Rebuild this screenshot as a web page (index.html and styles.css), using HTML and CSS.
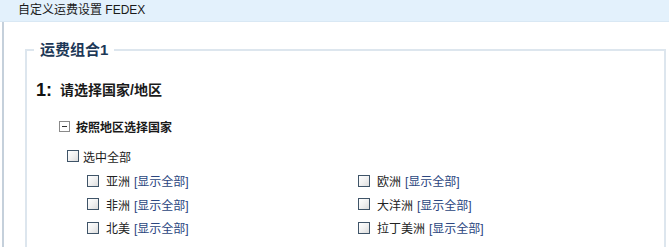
FILE: index.html
```html
<!DOCTYPE html>
<html lang="zh-CN">
<head>
<meta charset="utf-8">
<title>自定义运费设置 FEDEX</title>
<link rel="stylesheet" href="styles.css">
</head>
<body>
<div class="topbar">自定义运费设置 FEDEX</div>
<div class="main">
  <fieldset class="group">
    <legend class="group-title">运费组合1</legend>
    <div class="step"><b class="step-num">1:</b><span class="step-text">请选择国家/地区</span></div>
    <div class="tree-head"><span class="toggle"></span><span class="tree-label">按照地区选择国家</span></div>
    <div class="select-all"><span class="check"></span><span>选中全部</span></div>
    <div class="regions">
      <div class="region"><span class="check"></span><span class="name">亚洲</span><a class="more">[显示全部]</a></div>
      <div class="region"><span class="check"></span><span class="name">欧洲</span><a class="more">[显示全部]</a></div>
      <div class="region"><span class="check"></span><span class="name">非洲</span><a class="more">[显示全部]</a></div>
      <div class="region"><span class="check"></span><span class="name">大洋洲</span><a class="more">[显示全部]</a></div>
      <div class="region"><span class="check"></span><span class="name">北美</span><a class="more">[显示全部]</a></div>
      <div class="region"><span class="check"></span><span class="name">拉丁美洲</span><a class="more">[显示全部]</a></div>
    </div>
  </fieldset>
</div>
</body>
</html>
```
FILE: styles.css
```css
html, body {
  margin: 0;
  padding: 0;
  background: #fff;
}
body {
  font-family: "Liberation Sans", "Noto Sans CJK SC", sans-serif;
  font-size: 12px;
  color: #222;
  height: 247px;
  overflow: hidden;
}
.topbar {
  height: 21px;
  line-height: 21px;
  padding-left: 18px;
  background: #e3f1fc;
  border-bottom: 1px solid #d9e8f4;
  color: #1a1a1a;
  font-size: 12px;
}
.main {
  margin-left: 2px;
  border-left: 2px solid #c5d0db;
  padding: 18px 3px 0 21px;
  height: 207px;
  overflow: hidden;
}
.group {
  margin: 0;
  border: 2px solid #dde6ee;
  padding: 0 0 10px 7px;
  min-width: 0;
}
.group-title {
  padding: 0 6px;
  font-size: 15px;
  line-height: 20px;
  font-weight: bold;
  color: #1d3857;
}
.step {
  margin-top: 18px;
  height: 24px;
  line-height: 24px;
  padding-left: 2px;
  display: flex;
  align-items: center;
  gap: 8px;
}
.step-num {
  font-size: 18px;
  color: #111;
}
.step-text {
  font-size: 14px;
  font-weight: bold;
  color: #1a1a1a;
}
.tree-head {
  margin-top: 14px;
  height: 20px;
  display: flex;
  align-items: center;
  padding-left: 25px;
}
.toggle {
  width: 9px;
  height: 9px;
  border: 1px solid #8a8a8a;
  background: #fff;
  position: relative;
  margin-right: 6px;
}
.toggle::after {
  content: "";
  position: absolute;
  left: 2px;
  right: 2px;
  top: 4px;
  height: 1px;
  background: #333;
}
.tree-label {
  font-weight: bold;
  color: #1a1a1a;
}
.select-all {
  margin-top: 10px;
  height: 20px;
  display: flex;
  align-items: center;
  padding-left: 33px;
  color: #1a1a1a;
}
.select-all .check {
  margin-right: 4px;
}
.check {
  display: inline-block;
  width: 10px;
  height: 10px;
  border: 1px solid #3f5468;
  background: linear-gradient(135deg, #ffffff 0%, #f1f1f1 50%, #dcdcdc 100%);
  flex: none;
}
.regions {
  margin-top: 3px;
  padding-left: 53px;
  display: grid;
  grid-template-columns: 271px 1fr;
}
.region {
  height: 23.5px;
  display: flex;
  align-items: center;
  color: #222;
}
.region .check {
  margin-right: 7px;
}
.more {
  margin-left: 4px;
  color: #2b4680;
  text-decoration: none;
}
```
